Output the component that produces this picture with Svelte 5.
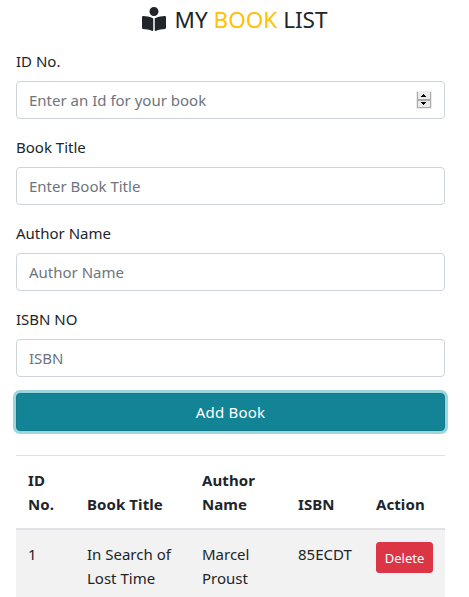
<script>
  const fields = [
    { id: 'id', label: 'ID No.', placeholder: 'Enter an Id for your book', stepper: true },
    { id: 'title', label: 'Book Title', placeholder: 'Enter Book Title' },
    { id: 'author', label: 'Author Name', placeholder: 'Author Name' },
    { id: 'isbn', label: 'ISBN NO', placeholder: 'ISBN' }
  ];
  let books = $state([
    { id: '1', title: 'In Search of Lost Time', author: 'Marcel Proust', isbn: '85ECDT' }
  ]);
  function remove(book) {
    books = books.filter((b) => b.id !== book.id);
  }
</script>

<main>
  <h4>
    <svg viewBox="0 0 512 512" aria-hidden="true"><path d="M352 96c0-53.02-42.98-96-96-96s-96 42.98-96 96 42.98 96 96 96 96-42.98 96-96zM233.59 241.1c-59.33-36.32-155.43-46.3-203.79-49.05C13.55 191.13 0 203.51 0 219.14v222.8c0 14.33 11.59 26.28 26.49 27.05 43.66 2.29 131.99 10.68 193.04 41.43 9.37 4.72 20.48-1.71 20.48-11.87V252.56c-.01-4.67-2.32-8.95-6.42-11.46zm248.61-49.05c-48.35 2.74-144.46 12.73-203.78 49.05-4.1 2.51-6.41 6.96-6.41 11.63v245.79c0 10.19 11.14 16.63 20.54 11.9 61.04-30.72 149.32-39.11 192.97-41.4 14.9-.78 26.49-12.73 26.49-27.06V219.14c-.01-15.63-13.56-28.01-29.81-27.09z" /></svg>
    <span>MY <span class="warning">BOOK</span> LIST</span>
  </h4>

  <form onsubmit={(e) => e.preventDefault()}>
    {#each fields as field}
      <div class="group">
        <label for={field.id}>{field.label}</label>
        <div class="control">
          <input id={field.id} type="text" placeholder={field.placeholder} />
          {#if field.stepper}
            <svg class="stepper" viewBox="0 0 16 18" aria-hidden="true">
              <rect width="16" height="18" fill="#ececec" />
              <path d="M1.5 1V17M14.5 1V17" stroke="#aaa" />
              <path d="M1 9H15" stroke="#aaa" stroke-width="2" />
              <path d="M1 16.5H15" stroke="#aaa" />
              <path d="M7 3H8V4H9V5H10V6H5V5H6V4H7ZM5 11H10V12H9V13H8V14H7V13H6V12H5Z" fill="#000" />
            </svg>
          {/if}
        </div>
      </div>
    {/each}
    <button class="add" type="submit">Add Book</button>
  </form>

  <table>
    <colgroup>
      <col class="c-id" /><col class="c-title" /><col class="c-author" /><col class="c-isbn" /><col />
    </colgroup>
    <thead>
      <tr><th>ID No.</th><th>Book Title</th><th>Author Name</th><th>ISBN</th><th>Action</th></tr>
    </thead>
    <tbody>
      {#each books as book (book.id)}
        <tr>
          <td>{book.id}</td>
          <td>{book.title}</td>
          <td>{book.author}</td>
          <td>{book.isbn}</td>
          <td><button class="delete" type="button" onclick={() => remove(book)}>Delete</button></td>
        </tr>
      {/each}
    </tbody>
  </table>
</main>

<style>
  :global(body) {
    background: #fff;
    overflow: hidden;
  }
  main {
    box-sizing: border-box;
    height: 597px;
    overflow: hidden;
    padding: 5px 24px 0 16px;
    font: 15px/24px 'Noto Sans', 'Open Sans', sans-serif;
    color: #212529;
  }
  h4 {
    display: flex;
    justify-content: center;
    align-items: center;
    gap: 9px;
    height: 28px;
    margin: 0 0 16px;
    padding-left: 8px;
    font-size: 22.5px;
    font-weight: 400;
    line-height: 28px;
    white-space: nowrap;
  }
  h4 > span {
    padding-top: 2px;
  }
  h4 svg {
    width: 24px;
    height: 24px;
    fill: currentColor;
  }
  .warning {
    color: #ffc107;
  }
  .group {
    margin-bottom: 16px;
  }
  label {
    display: block;
    margin-bottom: 8px;
  }
  .control {
    box-sizing: border-box;
    display: flex;
    align-items: center;
    height: 38px;
    padding: 0 12px;
    border: 1px solid #ced4da;
    border-radius: 4px;
  }
  input {
    flex: 1;
    min-width: 0;
    height: 24px;
    padding: 0;
    border: 0;
    outline: 0;
    background: transparent;
    font: inherit;
    color: #495057;
  }
  input::placeholder {
    color: #6c757d;
    opacity: 1;
  }
  .stepper {
    width: 16px;
    height: 18px;
  }
  button {
    display: block;
    font: inherit;
    color: #fff;
    cursor: pointer;
  }
  .add {
    width: 100%;
    height: 38px;
    padding: 0;
    border: 1px solid #117a8b;
    border-radius: 4px;
    background: #138496;
    box-shadow: 0 0 0 3px #9cd6df;
    letter-spacing: 0.2px;
  }
  table {
    width: 100%;
    margin-top: 24px;
    table-layout: fixed;
    border-collapse: separate;
    border-spacing: 0;
  }
  .c-id { width: 59px; }
  .c-title { width: 115px; }
  .c-author { width: 96px; }
  .c-isbn { width: 78px; }
  th {
    padding: 12px;
    border-top: 1px solid #dee2e6;
    border-bottom: 2px solid #dee2e6;
    text-align: left;
    vertical-align: bottom;
    font-weight: 700;
    letter-spacing: 0.08px;
  }
  td {
    padding: 12px 0 12px 12px;
    background: #f2f2f2;
    vertical-align: top;
  }
  .delete {
    width: 57px;
    height: 31px;
    padding: 2px 0 0;
    border: 1px solid #dc3545;
    border-radius: 3px;
    background: #dc3545;
    font-size: 13px;
    line-height: 21px;
  }
</style>
